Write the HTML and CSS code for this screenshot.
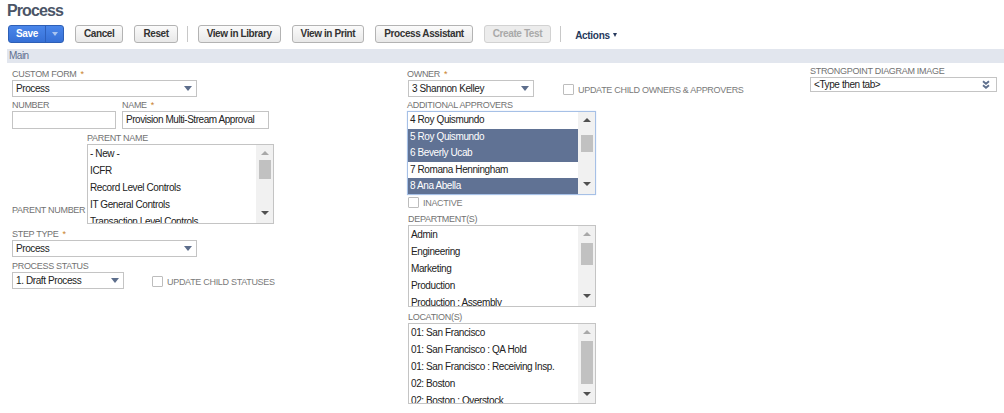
FILE: index.html
```html
<!DOCTYPE html>
<html>
<head>
<meta charset="utf-8">
<link rel="stylesheet" href="styles.css">
</head>
<body>
<h1 class="title">Process</h1>
<div class="toolbar">
  <div class="save"><span class="save-main">Save</span><span class="save-arrow"><i class="tri-w"></i></span></div>
  <button class="btn">Cancel</button>
  <button class="btn">Reset</button>
  <span class="sep"></span>
  <button class="btn">View in Library</button>
  <button class="btn">View in Print</button>
  <button class="btn">Process Assistant</button>
  <button class="btn disabled">Create Test</button>
  <span class="sep"></span>
  <span class="actions">Actions <i class="tri-a"></i></span>
</div>
<div class="section">Main</div>
<div class="form">
  <div class="col1">
    <div class="field f-custom">
      <div class="lbl">Custom Form<span class="req">*</span></div>
      <div class="select w185"><span>Process</span><i class="caret"></i></div>
    </div>
    <div class="pair">
      <div class="field">
        <div class="lbl">Number</div>
        <div class="input w104"></div>
      </div>
      <div class="field">
        <div class="lbl">Name<span class="req">*</span></div>
        <div class="input w147">Provision Multi-Stream Approval</div>
      </div>
    </div>
    <div class="parent">
      <div class="lbl pn">Parent Number</div>
      <div class="field">
        <div class="lbl">Parent Name</div>
        <div class="list w187 h80">
          <div class="items">
            <div class="row">- New -</div>
            <div class="row">ICFR</div>
            <div class="row">Record Level Controls</div>
            <div class="row">IT General Controls</div>
            <div class="row">Transaction Level Controls</div>
          </div>
          <div class="sb"><span class="ab"><i class="up off"></i></span><span class="thumb" style="margin-top:0px;height:19px"></span><span class="fill"></span><span class="ab bot"><i class="down"></i></span></div>
        </div>
      </div>
    </div>
    <div class="field f-step">
      <div class="lbl">Step Type<span class="req">*</span></div>
      <div class="select w185"><span>Process</span><i class="caret"></i></div>
    </div>
    <div class="field f-status">
      <div class="lbl">Process Status</div>
      <div class="inline">
        <div class="select w112"><span>1. Draft Process</span><i class="caret"></i></div>
        <label class="chk status-chk"><i class="box"></i><span class="lbl">Update Child Statuses</span></label>
      </div>
    </div>
  </div>

  <div class="col2">
    <div class="field f-owner">
      <div class="lbl">Owner<span class="req">*</span></div>
      <div class="inline">
        <div class="select w126"><span>3 Shannon Kelley</span><i class="caret"></i></div>
        <label class="chk owner-chk"><i class="box"></i><span class="lbl">Update Child Owners &amp; Approvers</span></label>
      </div>
    </div>
    <div class="field">
      <div class="lbl">Additional Approvers</div>
      <div class="list focus w189 h84">
        <div class="items tight">
          <div class="row">4 Roy Quismundo</div>
          <div class="row sel">5 Roy Quismundo</div>
          <div class="row sel">6 Beverly Ucab</div>
          <div class="row">7 Romana Henningham</div>
          <div class="row sel">8 Ana Abella</div>
        </div>
        <div class="sb"><span class="ab"><i class="up"></i></span><span class="thumb" style="margin-top:8px;height:17px"></span><span class="fill"></span><span class="ab bot"><i class="down"></i></span></div>
      </div>
    </div>
    <label class="chk inactive"><i class="box"></i><span class="lbl">Inactive</span></label>
    <div class="field f-dept">
      <div class="lbl">Department(s)</div>
      <div class="list w188 h82">
        <div class="items">
          <div class="row">Admin</div>
          <div class="row">Engineering</div>
          <div class="row">Marketing</div>
          <div class="row">Production</div>
          <div class="row">Production : Assembly</div>
        </div>
        <div class="sb"><span class="ab"><i class="up off"></i></span><span class="thumb" style="margin-top:2px;height:22px"></span><span class="fill"></span><span class="ab bot"><i class="down"></i></span></div>
      </div>
    </div>
    <div class="field f-loc">
      <div class="lbl">Location(s)</div>
      <div class="list w188 h81">
        <div class="items">
          <div class="row">01: San Francisco</div>
          <div class="row">01: San Francisco : QA Hold</div>
          <div class="row">01: San Francisco : Receiving Insp.</div>
          <div class="row">02: Boston</div>
          <div class="row">02: Boston : Overstock</div>
        </div>
        <div class="sb"><span class="ab"><i class="up off"></i></span><span class="thumb" style="margin-top:2px;height:43px"></span><span class="fill"></span><span class="ab bot"><i class="down"></i></span></div>
      </div>
    </div>
  </div>

  <div class="col3">
    <div class="field">
      <div class="lbl">Strongpoint Diagram Image</div>
      <div class="select sp w187"><span>&lt;Type then tab&gt;</span>
        <svg class="dchev" width="8" height="9" viewBox="0 0 8 9"><path d="M1 1.2 L4 3.8 L7 1.2" fill="none" stroke="#5d6e8c" stroke-width="1.8"/><path d="M1 5.2 L4 7.8 L7 5.2" fill="none" stroke="#5d6e8c" stroke-width="1.8"/></svg>
      </div>
    </div>
  </div>
</div>
</body>
</html>
```
FILE: styles.css
```css
* { box-sizing: border-box; }
body {
  margin: 0;
  width: 1004px;
  height: 413px;
  overflow: hidden;
  background: #fff;
  color: #222;
  font-family: "Liberation Sans", Arial, sans-serif;
}
.title {
  margin: 0;
  padding-left: 7px;
  font-size: 16px;
  letter-spacing: -0.9px;
  line-height: 22px;
  font-weight: bold;
  color: #4b5567;
}
.toolbar {
  display: flex;
  align-items: center;
  gap: 11px;
  height: 18px;
  margin: 3px 0 0 8px;
}
.btn {
  height: 18px;
  padding: 0 8px;
  border: 1px solid #b3b3b3;
  border-radius: 3px;
  background: linear-gradient(#fbfbfb, #e8e8e8);
  font-family: inherit;
  font-size: 10px;
  letter-spacing: -0.4px;
  font-weight: bold;
  line-height: 16px;
  color: #333;
}
.btn.disabled {
  background: #ececec;
  border-color: #d2d2d2;
  color: #a9a9a9;
}
.save {
  display: flex;
  height: 18px;
  border: 1px solid #2d5fb6;
  border-radius: 3px;
  background: linear-gradient(#4a86ea, #3670d6);
}
.save-main {
  width: 37px;
  text-align: center;
  color: #fff;
  font-size: 10px;
  letter-spacing: -0.3px;
  font-weight: bold;
  line-height: 16px;
  border-right: 1px solid #2d60bd;
}
.save-arrow {
  width: 17px;
  display: flex;
  align-items: center;
  justify-content: center;
}
.tri-w {
  border-left: 3px solid transparent;
  border-right: 3px solid transparent;
  border-top: 4px solid #a9c4f0;
}
.sep {
  width: 1px;
  height: 16px;
  background: #c8c8c8;
  margin: 0 -1px 0 -2px;
}
.actions {
  margin-left: 4px;
  padding-top: 2px;
  font-size: 10px;
  letter-spacing: -0.3px;
  font-weight: bold;
  color: #26395c;
  display: flex;
  align-items: center;
  gap: 3px;
}
.tri-a {
  border-left: 2.5px solid transparent;
  border-right: 2.5px solid transparent;
  border-top: 4px solid #26395c;
}
.section {
  margin: 6px 0 0 7px;
  height: 14px;
  padding-left: 2px;
  background: #e2e6ee;
  color: #5e6f8e;
  font-size: 10px;
  letter-spacing: -0.5px;
  line-height: 14px;
}
.form {
  display: flex;
  padding: 6px 0 0 12px;
}
.col1 { width: 395px; }
.col2 { width: 403px; }
.col3 { width: 187px; margin-top: -3px; }
.lbl {
  font-size: 9px;
  letter-spacing: -0.3px;
  line-height: 11px;
  color: #727272;
  text-transform: uppercase;
  white-space: nowrap;
}
.req { color: #c9822b; margin-left: 4px; }
.select {
  height: 17px;
  border: 1px solid #c4c4c4;
  background: #fff;
  display: flex;
  align-items: center;
  justify-content: space-between;
  padding: 0 4px 0 3px;
  font-size: 10px;
  letter-spacing: -0.4px;
  white-space: nowrap;
}
.caret {
  border-left: 4px solid transparent;
  border-right: 4px solid transparent;
  border-top: 5px solid #5d6e8c;
}
.input {
  height: 18px;
  border: 1px solid #c4c4c4;
  padding: 0 3px;
  font-size: 10px;
  letter-spacing: -0.45px;
  line-height: 16px;
  white-space: nowrap;
}
.w104 { width: 104px; }
.w112 { width: 112px; }
.w126 { width: 126px; }
.w147 { width: 147px; }
.w185 { width: 185px; }
.w187 { width: 187px; }
.w188 { width: 188px; }
.w189 { width: 189px; }
.h80 { height: 80px; }
.h81 { height: 81px; }
.h82 { height: 82px; }
.h84 { height: 84px; }
.f-custom { margin-bottom: 3px; }
.pair { display: flex; gap: 6px; margin-bottom: 4px; }
.parent { display: flex; align-items: flex-end; margin-bottom: 5px; }
.parent .pn { width: 75px; margin-bottom: 8px; }
.f-step { margin-bottom: 4px; }
.inline { display: flex; align-items: flex-start; }
.chk { display: flex; align-items: flex-end; gap: 4px; }
.box {
  width: 11px;
  height: 11px;
  border: 1px solid #bdbdbd;
  border-radius: 1px;
  background: #fff;
}
.chk .lbl { line-height: 10px; color: #7a7a7a; }
.status-chk { margin: 4px 0 0 28px; }
.owner-chk { margin: 4px 0 0 29px; }
.f-owner { margin-bottom: 3px; }
.f-owner .select { margin-left: 1px; }
.inactive { margin: 2px 0 0 1px; }
.f-dept { margin: 6px 0 0 1px; }
.f-loc { margin: 5px 0 0 1px; }
.list {
  display: flex;
  border: 1px solid #c4c4c4;
  background: #fff;
  overflow: hidden;
}
.list.focus {
  border-color: #a6c0e6;
  box-shadow: 0 0 1px #c4d6f2;
}
.items { flex: 1; overflow: hidden; }
.row {
  height: 17px;
  line-height: 17px;
  padding-left: 2px;
  font-size: 10px;
  letter-spacing: -0.4px;
  white-space: nowrap;
  color: #222;
}
.tight .row { height: 16.6px; line-height: 16.6px; }
.row.sel { background: #607294; color: #fff; }
.sb {
  width: 17px;
  flex: none;
  background: #f1f1f1;
  display: flex;
  flex-direction: column;
  align-items: center;
}
.ab {
  height: 15px;
  flex: none;
  display: flex;
  align-items: center;
  justify-content: center;
}
.ab.bot { height: 20px; }
.fill { flex: 1; }
.up {
  border-left: 4px solid transparent;
  border-right: 4px solid transparent;
  border-bottom: 4px solid #505050;
}
.up.off { border-bottom-color: #a8a8a8; }
.down {
  border-left: 4px solid transparent;
  border-right: 4px solid transparent;
  border-top: 4px solid #505050;
}
.thumb {
  width: 12px;
  flex: none;
  margin-left: 1px;
  background: #c1c1c1;
}
.sp { height: 15px; padding-right: 6px; }
.dchev { display: block; }
```
